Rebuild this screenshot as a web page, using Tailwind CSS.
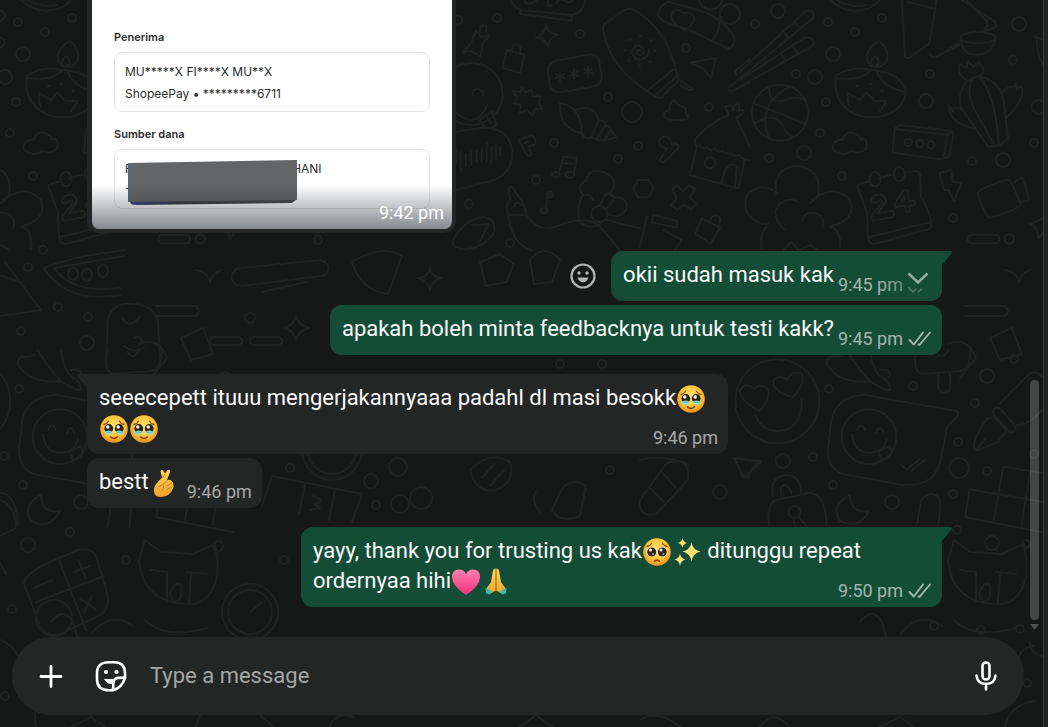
<!DOCTYPE html>
<html lang="id">
<head>
  <meta charset="UTF-8" />
  <meta name="viewport" content="width=device-width, initial-scale=1.0"/>
  <title>Chat</title>
  <script src="https://cdn.jsdelivr.net/npm/@tailwindcss/browser@4"></script>
</head>
<body class="h-screen overflow-hidden bg-[#161717] font-['Roboto',sans-serif] text-[#fafafa]">

  <!-- Shared shapes -->
  <svg class="absolute size-0" aria-hidden="true">
    <defs>
      <radialGradient id="face" cx="50%" cy="40%" r="60%">
        <stop offset="0" stop-color="#ffe36b"/><stop offset=".6" stop-color="#fdc63c"/><stop offset="1" stop-color="#ee8f1c"/>
      </radialGradient>
      <linearGradient id="skin" x1="0" y1="0" x2="0" y2="1">
        <stop offset="0" stop-color="#ffd95a"/><stop offset="1" stop-color="#f2a12c"/>
      </linearGradient>
      <linearGradient id="pink" x1="0" y1="0" x2="0" y2="1">
        <stop offset="0" stop-color="#ff7fb0"/><stop offset="1" stop-color="#f0307c"/>
      </linearGradient>
      <linearGradient id="cover" x1="0" y1="0" x2="1" y2="0">
        <stop offset="0" stop-color="#3a478a"/><stop offset=".3" stop-color="#3f4043"/><stop offset="1" stop-color="#4c4b4d"/>
      </linearGradient>
      <symbol id="tearful" viewBox="0 0 28 28">
        <circle cx="14" cy="14" r="13.8" fill="url(#face)"/>
        <path d="M4 9.500q3-.5 4.500-3.300M24 9.500q-3-.5-4.500-3.300" fill="none" stroke="#8d4d10" stroke-width="1.300" stroke-linecap="round"/>
        <path d="M4.500 15q-.5 4.500 3 5 3.500 0 5-3M23.500 15q.5 4.500-3 5-3.500 0-5-3" fill="#8fe0d8"/>
        <circle cx="8.800" cy="13.500" r="4.400" fill="#26221f"/><circle cx="19.200" cy="13.500" r="4.400" fill="#26221f"/>
        <path d="M5.500 16.300q3.300-1.800 6.600 0-1 1.700-3.300 1.700t-3.300-1.700zM15.900 16.300q3.300-1.800 6.600 0-1 1.700-3.300 1.700t-3.300-1.700z" fill="#7fd0cb"/>
        <circle cx="7.800" cy="12" r="1.700" fill="#fff"/><circle cx="18.200" cy="12" r="1.700" fill="#fff"/>
        <path d="M10.500 21.800q3.500 3.300 7 0" fill="none" stroke="#8a3d12" stroke-width="1.500" stroke-linecap="round"/>
      </symbol>
      <symbol id="pleading" viewBox="0 0 28 28">
        <circle cx="14" cy="14" r="13.800" fill="url(#face)"/>
        <path d="M4 8.500q3-.5 4.500-3M24 8.500q-3-.5-4.500-3" fill="none" stroke="#8d4d10" stroke-width="1.300" stroke-linecap="round"/>
        <circle cx="8.500" cy="14" r="5" fill="#fff"/><circle cx="19.500" cy="14" r="5" fill="#fff"/>
        <circle cx="8.700" cy="14" r="4.500" fill="#30211a"/><circle cx="19.300" cy="14" r="4.500" fill="#30211a"/>
        <circle cx="7.500" cy="12" r="1.500" fill="#fff"/><circle cx="18" cy="12" r="1.500" fill="#fff"/>
        <circle cx="10" cy="16" r=".9" fill="#b9a596"/><circle cx="20.500" cy="16" r=".9" fill="#b9a596"/>
        <path d="M11.500 23.200q2.500-2.200 5 0" fill="none" stroke="#8a3d12" stroke-width="1.500" stroke-linecap="round"/>
      </symbol>
      <symbol id="sparkles" viewBox="0 0 28 28">
        <path fill="#fbe272" d="M18.500 4.500q1.500 7.500 9 9-7.500 1.500-9 10-1.500-8.500-9-10 7.500-1.500 9-9zM9.500 0q.7 4 4.500 5-3.800 1-4.500 5Q8.800 6 5 5 8.800 4 9.500 0zM7 15.500q.8 5 5.500 6-4.700 1-5.500 6.500-.8-5.500-5.500-6.500 4.700-1 5.500-6z"/>
      </symbol>
      <symbol id="heart" viewBox="0 0 28 28">
        <path fill="url(#pink)" d="M14 27Q0 18 0 9q0-7.500 7-7.500 5 0 7 4.500 2-4.500 7-4.500 7 0 7 7.500 0 9-14 18z"/>
      </symbol>
      <symbol id="pray" viewBox="0 0 28 28">
        <path d="M13.800.5q-2.500 0-3 3L9 14l-4.500 6.500 4 5 5.300-3zM14.200.5q2.500 0 3 3L19 14l4.500 6.500-4 5-5.300-3z" fill="url(#skin)"/>
        <path d="M14 1v22" stroke="#b56a16" stroke-width=".9"/>
        <path d="M3.500 19.500l6 3.500-1.500 3.500-4-1zM24.500 19.500l-6 3.500 1.500 3.500 4-1z" fill="#38b6a6"/>
      </symbol>
      <symbol id="finger-heart" viewBox="0 0 28 28">
        <path d="M10.500 2q1.800-1.800 3 0l1.500 2.500L17.500 1q2-1 2.500 1 .2 1-1 3.500L17 11q4-1 5 1.500 1.800 1 1.300 3 1 1.500-.3 4Q20 27.500 11 28q-6.500 0-7-5.500-.5-5 3-8.500l5-5.500z" fill="url(#skin)"/>
        <path d="M15 5l-2.500 4M17 11.500l-4 4M21.500 14l-4.500 3M22 18l-5 2.500M8 18q4-3 5.500-1t-2 5" fill="none" stroke="#c87a1c" stroke-width="1" stroke-linecap="round"/>
      </symbol>
      <symbol id="ticks" viewBox="0 0 24 16">
        <path d="M1.500 9l4.300 4.500L15 1.500M10.500 13.500l1 .3L22 1.500" fill="none" stroke="currentColor" stroke-width="1.900" stroke-linejoin="round" stroke-linecap="round"/>
      </symbol>
    </defs>
  </svg>

  <div class="relative flex h-full">
    <!-- Doodle wallpaper -->
    <svg class="absolute left-0 top-0 h-[727px] w-[1048px]" viewBox="0 0 1048 727" fill="none" stroke="#212323" stroke-width="2" stroke-linecap="round" stroke-linejoin="round" aria-hidden="true">
      <g id="tile">
        <g transform="translate(450 0) scale(.3333)" stroke-width="6">
          <path d="M185 0q5 25 30 30l150 15q35-5 40-45M210 30v12l155 20V50M225 0q0 15 15 10T260 0M295 0l-3 18 15-2M320 10q5-15 20-10 25 15 30-5"/>
          <path d="M78 92l15 18 25-5-20 27-7 38-28-18-23 5 22-27zM90 95q-2-20 14-20 8 5 4 20"/>
          <path d="M288 76q2 22 36 28-28 8-29 36-10-26-38-28 28-10 31-36z"/>
          <path d="M170 150l54 14-14 54-52-14zM185 152q0-20 15-18 16 4 10 22"/>
          <path d="M320 182l95-18q30-2 34 25l6 40q0 25-22 30l-100 18q-30 2-34-25l-6-40q0-25 27-30z"/>
          <path d="M330 215v28M318 222l24 14M342 222l-24 14M372 207v28M360 214l24 14M384 214l-24 14M415 200v28M403 207l24 14M427 207l-24 14"/>
          <path d="M460 92q-5-15 10-25l50-35q15-10 30-3 110 60 135 215l-50 48q-15 5-28-8-130-80-147-192zM595 270l76-62M614 288l70-62M690 240l40 28q-10 8-38-10"/>
          <path d="M570 152q-8-6-10 4 4 14 18 6 8-20-10-26-22 2-22 22 6 22 28 20 22-6 22-28"/>
          <circle cx="570" cy="152" r="45" stroke-dasharray="4 31"/>
          <path d="M625 40q0-20 30-35l70 20q90 20 130 90 0 25-20 30l-130-60q-85-20-80-45zM808 52q5 40-20 68M705 90q-45-20-40-50 15-20 35 0 25-10 32 15 0 20-27 35z"/>
          <circle cx="840" cy="42" r="30"/><circle cx="782" cy="-8" r="36"/>
          <path d="M720 188l78-14-16 60-22-28zM860 225l-5-12 45-35M835 270l8 5 57-28M837 262l63-50"/>
          <circle cx="65" cy="282" r="93"/><path d="M68 285q0-20 17-18 14 2 14 20M20 340q60 50 92-25M88 360l38-25 14 40q-30 25-52-15zM108 345l12 22"/>
          <path d="M18 395l80-12q80 0 88 70 5 72-70 92l-98 25M18 450v40M32 455v60M48 462v36M64 455v40M80 450v36M95 445v40M110 425v60M124 440v50M138 435v44M150 440v24"/>
          <path d="M215 262l12 16 18-10 4 20 25 2-8 18 12 20-22-2-8 20-16-16-22 8 2-22-20-6 10-18-14-18 24 2z"/>
          <path d="M330 310q62 8 66 90-70-14-66-90zM378 328q55-18 68 35l-22 50q-25 5-28-13M446 362q20-2 20 15l-26 40-18-4M466 378q18-2 16 12l-20 32-22-5M482 388l16 24-36 10"/>
          <path d="M672 298q5 15 22 20 22 8 12 25 15 6 4 15-35 8-65-4-10-20 14-24-2-20 13-32z"/>
          <path d="M735 420q30-42 100-75l-8-25q20-12 22 10 2-25 18-15v18q16-8 12 6l-20 15 40 86M735 420q-5 22 15 16 8 14 20 4 10 14 24 6 10 14 24 6 10 14 24 6 10 14 24 6 10 14 34 16M740 442l-20 84 145 40 20-90M815 548l10-38q15-25 36-12l-6 62"/>
          <circle cx="780" cy="488" r="16"/>
          <path d="M205 420l40-15q16 8 10 28l-20 8 10 22q-8 8-14 2zM222 430l14-5M640 410q-20 10-8 28l18 8-20 34q6 10 14 6l42-44-8-14-12 8q-6-30-26-26z"/>
          <path d="M328 515l12-44 40 2-8 48M338 490l38 2M288 630l6-52 14 12"/>
          <ellipse cx="318" cy="524" rx="12" ry="8"/><ellipse cx="360" cy="524" rx="14" ry="9"/><ellipse cx="282" cy="632" rx="10" ry="7"/><circle cx="300" cy="584" r="9"/>
          <path d="M400 585q-25-25 8-42 10-40 50-28 42 15 32 50-5 15-20 20M395 590q20-15 35 10M395 590q-20 60 0 80 30 20 60 0M450 615l20-38 25 15-25 35M495 592q40 0 34 36-20 30-55 15M470 660l100 25"/>
          <circle cx="448" cy="642" r="24"/>
          <path d="M180 645q-20-20 0-45l-5-35q10-15 20 10l25 35 10 35zM190 620q10-20 25-5M175 645q10 90 70 105M230 645q40 60 100 30 80-30 120 5l60 70"/>
          <path d="M564 540h32l14 25-14 27h-32l-14-27zM668 568l14-12 18 18 18-18 18 12-16 22 18 22-16 18-20-16-20 16-18-14 16-22z"/>
          <path d="M590 650l-20 90M610 645l70 18v20l-75-16zM640 690l55 30-20 30M755 655l55 28-28 48-46-30zM780 662q5-20 24-14 14 10 0 30"/>
          <path d="M10 720q30-60 90-70 40 5 32 50-30 40-80 48-50 0-42-28zM65 675l50-2-25 50"/>
        </g>
        <g transform="translate(740 0) scale(.3333)" stroke-width="6">
          <path d="M0 215L195 35q15-10 25 5 6 10-5 18L0 235M0 240l190-125q18-8 28 5 8 12-5 20L0 260M130 95l14 18M162 65l18 20M125 165l12 20M160 140l12 20"/>
          <path d="M270 0q30 30 75 32 50 0 75-32M290 0q40 25 90 15"/>
          <path d="M485 0l10 165q0 15 18 5l55-40 22-130M500 5l80 20M665 0l100 65q10 15-10 22l-30 8M680 0l60 65q10 10-5 20M568 160q5 15 20 10l70-35M600 165l55-35"/>
          <ellipse cx="714" cy="113" rx="52" ry="17"/><path d="M662 115q5 48 40 48 55 5 65-48"/>
          <circle cx="120" cy="338" r="84"/><path d="M88 265q-5 40 40 38 50-20 70 0M40 310q80 30 155 62M45 370q60-40 85 10 10 25 30 30M150 260q-100 50-65 152"/>
          <path d="M418 122q-30 15-38 45 0 30 25 34 35 0 38-35-4-25-25-44zM405 168q-25 25 0 32 22-10 0-32zM395 210q-60-15-108 18-10 95 80 122l50 2q75-20 80-75-10-55-85-65zM290 235q70 10 105-25M410 215q20 50 85 60M330 320q-10-20-5-40l35 20 20-22 22 24 38 2-20 30"/>
          <path d="M352 258h2M390 252h2M425 272h2" stroke-width="9"/>
          <path d="M660 300q0-55 50-70 60 0 80 65l14 120q-20 25-60 25l-72-105q-14-15-12-35zM700 232q-25 40 5 100l60 105M715 228q50 50 62 205M680 240q-30-15-20-48l20 12 4-20 18 16 12-16q30 30 5 42M705 385q-70-10-78-60l30-2 15 10M785 280q20-30 60-18 10 40-45 90M625 315l15 20M825 250l5 16"/>
          <path d="M300 460q-30-5-18-32 15-12 25-8 15-38 50-12 10 12 4 10 25-8 17 30-20 15-45 4-15 14-33 8z"/>
          <path d="M465 385l15-10 155 18 5 12-12 65-25 8-145-20zM465 388l158 16 15-10M622 406l-12 68"/>
          <circle cx="505" cy="427" r="11"/><circle cx="540" cy="431" r="11"/><circle cx="573" cy="435" r="11"/>
          <path d="M110 585q-15-80 60-88 75 10 65 82-5 20-25 30M115 580q-50-35-90 0-30 60 35 90l25 2M215 600q70-50 115 0 20 60-60 80M80 680q-25 30-15 65M270 680q35 10 30 65M175 605q-50-20-70 30 5 35 28 53M187 660q10-30 45-18 25 15 15 42M130 750l25-25 20 25M180 750l30-15 25 15"/>
          <path d="M352 560q0-10 35-15M415 535l45-12M490 518l35-5q14 2 16 15l2 65M352 560l28 75 4 75q2 25 22 22l160-45q12-5 8-20-10-50-32-75M385 712l185-45"/>
          <ellipse cx="405" cy="537" rx="16" ry="22"/><ellipse cx="478" cy="522" rx="16" ry="22"/>
          <path d="M392 605q5-25 35-20 20 15 0 35l-15 20 45-8q12 10 0 20l-60 10q-8-10 5-24l25-30q0-10-12-5-15 12-23 2zM465 610l25-38q15-5 15 8l2 22 18 2-2 12-16 2 4 16-12 3-4-20-30 5zM482 604l12-3-2-14z"/>
          <path d="M598 520l36-10 4 35 26 4-22 55-16-35-14 2zM712 580q0-12 90-42 15 5 40 75 0 12-90 40-12 5-40-73zM822 548l22-15q8 5 24 68l-26 4"/>
          <rect x="682" y="704" width="96" height="26" rx="13"/><circle cx="808" cy="717" r="14"/>
          <path d="M882 110q15 5 30 10M890 120q5 60 22 80M868 670q20 0 44-20M868 670q25 8 28 45l16-20"/>
        </g>
        <g transform="translate(730 350) scale(.3333)" stroke-width="6">
          <circle cx="142" cy="154" r="126"/><path d="M75 195q20 50 75 48 70-10 65-95M88 182q-55-25-58-60 15-30 42-5 20-20 42 0 10 30-26 65zM188 142q-55-15-58-48 15-25 42-5 12-30 42-18 15 30-26 71z"/>
          <path d="M290 40q0-25 30-20l20-5M290 40q30 60 130 55 50 30 60 25 0-30-30-40Q425 50 420 0M350 0q30 50 70 95M450 60q35-5 28 20"/>
          <path d="M400 134l275 48q15 2 8 15l-32 35-20 100q-15 65-80 72h-35l-160-28q-65-10-62-80l10-85q15-70 96-77z"/>
          <circle cx="417" cy="260" r="82"/><path d="M382 240q12-28 22 0M438 248q12-28 22 0M366 252q5 55 52 56 45 0 52-42M445 305l35-18 5 20q-10 25-30 20zM515 345l15 14 40-32M545 360l40-30"/>
          <path d="M560 0q-15 60 15 72l110-8q40-5 35-64M625 74v40q5 16 20 15 16-2 16-20V70M620 5q15 30 35-5"/>
          <path d="M732 290q-5-20 40-85l20-5 38 40-25 35-60 26q-12 0-13-11zM740 298l28-35M790 180q10-15 25 0l42 50q0 16-16 18l-50-55zM808 162l90-90q20-12 38 8M860 225q30 5 76-45"/>
          <path d="M12 324l78 10q-30 15-34 52-30-20-44-62zM128 440q-8-65 45-65 40 5 40 55M155 435q-8-25 8-30 12 0 22 25M118 530q-10-65 20-80l100-22q50 5 52 98"/>
          <circle cx="194" cy="486" r="18"/><path d="M190 505l5 25M205 500l25 30"/>
          <path d="M360 435q-60 30-30 78 55 30 87-30-55 10-57-48zM560 530l12-75q15-30 45-20 15 10 14 30l-6 65"/>
          <path d="M820 350l120 20M820 350l-28 160M718 418l222 38M718 418l-12 84 234 45M900 365l-25 160"/>
        </g>
        <!-- Middle and bottom of the tile -->
        <path d="M480 262l20-8 14 10-8 18-20 4zM530 260q14-18 30 0l-8 22-18 2zM352 262q30-18 50-6l-14 38q-28-4-36-32zM262 292l45-10M430 268q2 10 12 10-10 2-12 12-2-10-12-12 10 0 12-10zM232 276q2-8 10-8l78-8q8 2 8 8t-6 8l-80 10q-10 0-10-10z"/>
        <rect x="210" y="337" width="32" height="8" rx="4"/><rect x="250" y="337" width="32" height="8" rx="4"/>
        <path d="M296 316q2 10 14 12-12 2-14 12-2-10-12-12 10-2 12-12zM262 506l10-30 90 18-10 28M305 484l-6 30M335 490l-6 30M312 496q10 2 8 6l-6 2 6 4-10 2"/>
        <circle cx="332" cy="450" r="30"/><circle cx="332" cy="450" r="24"/>
        <path d="M470 470q20-20 40-8 6 20-14 28-20 4-26-20zM482 478l12-14M490 486l14-16M560 492q10-16 26-6l-6 30q-20 8-28-6zM640 500l26-36q24-10 22 16l-32 34q-18 4-16-14zM650 488l14 14M662 472l14 16M640 460q20-6 48 4M540 512q-10-12-4-20M735 458l26 4-18 16z"/>
        <path d="M948 560l6-20 16 12 32 2 22-10q10 50-20 60-52 2-56-44zM960 570l16 2v30M996 572l20 2M1000 574l-2 28M984 585q8-4 6 8 0 10-8 8-6-8 2-16z"/>
        <path d="M965 306h40M965 316h40q6-5 0-10M990 338l22-10 10 26-22 6zM948 344q20-8 28 14l-16 20M1005 270q12 2 14 12 2-10 12-12"/>
        <path d="M954 620q20 20 62 8M860 622q12-16 22 0l4 14M900 634q20-24 42-8M1018 660q2-12 16-14M1005 727q4-22 30-26M1030 642q0 12 12 14"/>
        <path d="M240 715q12-14 22 2l12 10M330 727q4-16 24-10M520 727l16-12 16 12M640 720q18-12 40 7M760 727q12-18 28-2M880 727l20-10 14 10"/>
      </g>
      <use href="#tile" x="-809"/>
      <!-- Left column -->
      <path d="M44 268q30-12 82-18M44 268q22 36 76 27M54 268l70-12M54 268q18 26 66 20"/>
      <ellipse cx="73" cy="274" rx="5" ry="6"/><ellipse cx="87" cy="275" rx="5" ry="6"/><ellipse cx="103" cy="271" rx="5" ry="6"/>
      <path d="M5 262l36 48-41 6M0 275l22 8"/>
      <path d="M106 362l2-44q6-16 24-14 22 0 26 18l2 38M122 318q8 12 18-2M134 338q6-4 8 4M124 346q10 8 20 2"/>
      <path d="M24 584q0-10 26-22l28-12q14-2 18 6l12 40q2 16-14 22l-34 16q-12 4-20-8zM36 602l68-26M58 558l28 72M34 588l18-8M78 560l8 18M74 572l16-6M80 598l16 12M92 596l-8 16"/>
      <circle cx="54" cy="618" r="18"/>
      <circle cx="250" cy="612" r="28"/><circle cx="250" cy="612" r="22"/><path d="M250 612l12-10M6 574l-8-14"/>
      <path d="M0 500q16 6 16 28l-16 8M0 640q14 4 20 22M36 727l-2-20 16-14"/>
      <!-- Loose dots -->
      <g>
        <circle cx="755" cy="24" r="4"/><circle cx="778" cy="11" r="7"/><circle cx="828" cy="22" r="4"/><circle cx="855" cy="32" r="4"/><circle cx="882" cy="18" r="4"/><circle cx="833" cy="54" r="7"/><circle cx="796" cy="74" r="4"/><circle cx="815" cy="77" r="7"/><circle cx="826" cy="102" r="4"/><circle cx="820" cy="133" r="4"/><circle cx="804" cy="153" r="7"/><circle cx="769" cy="158" r="4"/><circle cx="842" cy="176" r="4"/>
        <circle cx="930" cy="74" r="4"/><circle cx="926" cy="101" r="7"/><circle cx="1019" cy="24" r="7"/><circle cx="1013" cy="60" r="4"/><circle cx="1039" cy="107" r="7"/><circle cx="1034" cy="143" r="4"/><circle cx="972" cy="161" r="4"/><circle cx="1003" cy="160" r="7"/><circle cx="953" cy="218" r="4"/>
        <circle cx="458" cy="20" r="4"/><circle cx="497" cy="18" r="4"/><circle cx="580" cy="34" r="4"/><circle cx="686" cy="48" r="4"/><circle cx="608" cy="97" r="4"/><circle cx="709" cy="107" r="4"/><circle cx="554" cy="143" r="4"/><circle cx="638" cy="146" r="4"/><circle cx="618" cy="159" r="4"/><circle cx="536" cy="180" r="4"/><circle cx="469" cy="204" r="4"/><circle cx="632" cy="112" r="10"/><circle cx="510" cy="243" r="4"/>
        <circle cx="829" cy="389" r="4"/><circle cx="913" cy="386" r="4"/><circle cx="987" cy="376" r="7"/><circle cx="1014" cy="359" r="4"/><circle cx="975" cy="403" r="4"/><circle cx="958" cy="442" r="4"/><circle cx="959" cy="468" r="10"/><circle cx="987" cy="471" r="4"/><circle cx="953" cy="494" r="4"/><circle cx="783" cy="461" r="7"/><circle cx="813" cy="457" r="4"/><circle cx="833" cy="485" r="4"/><circle cx="892" cy="502" r="7"/><circle cx="1034" cy="454" r="4"/>
        <circle cx="18" cy="22" r="4"/><circle cx="72" cy="18" r="4"/><circle cx="45" cy="32" r="4"/><circle cx="23" cy="54" r="7"/><circle cx="5" cy="77" r="7"/><circle cx="16" cy="102" r="4"/><circle cx="10" cy="133" r="4"/><circle cx="33" cy="176" r="4"/><circle cx="43" cy="250" r="4"/><circle cx="28" cy="267" r="4"/><circle cx="58" cy="307" r="4"/><circle cx="88" cy="317" r="4"/><circle cx="87" cy="343" r="7"/><circle cx="21" cy="331" r="4"/><circle cx="19" cy="389" r="4"/><circle cx="4" cy="456" r="4"/><circle cx="23" cy="485" r="4"/><circle cx="81" cy="502" r="7"/><circle cx="70" cy="532" r="4"/><circle cx="28" cy="545" r="7"/><circle cx="12" cy="609" r="4"/>
        <circle cx="290" cy="468" r="4"/><circle cx="398" cy="467" r="9"/><circle cx="371" cy="481" r="7"/><circle cx="421" cy="498" r="11"/><circle cx="376" cy="505" r="4"/><circle cx="400" cy="504" r="9"/><circle cx="610" cy="470" r="4"/><circle cx="720" cy="492" r="7"/><circle cx="992" cy="543" r="7"/><circle cx="957" cy="530" r="4"/><circle cx="1026" cy="544" r="4"/><circle cx="934" cy="626" r="4"/><circle cx="981" cy="630" r="4"/><circle cx="1020" cy="629" r="4"/><circle cx="1027" cy="683" r="4"/><circle cx="5" cy="696" r="4"/><circle cx="218" cy="546" r="5"/><circle cx="126" cy="560" r="4"/><circle cx="284" cy="560" r="4"/><circle cx="318" cy="240" r="4"/><circle cx="250" cy="318" r="5"/><circle cx="560" cy="364" r="4"/><circle cx="602" cy="364" r="4"/>
      </g>
    </svg>

    <main class="relative flex min-w-0 flex-1 flex-col">
      <!-- Messages -->
      <div class="flex flex-1 flex-col items-start justify-end overflow-hidden pr-[101px] pb-[30px] pl-[87px] text-[22px] leading-[30px]">

        <div class="relative w-[369px] shrink-0 overflow-hidden rounded-xl border-4 border-l-5 border-[#242626] bg-white px-[22px] pt-20 pb-5 font-['Inter',sans-serif] text-[#2b2b2b]">
          <h3 class="text-[11px] leading-4 font-semibold">Penerima</h3>
          <div class="mt-[7px] h-[60px] rounded-lg border border-[#e2e2e2] px-2.5 pt-2 text-xs leading-[22px]">
            <p>MU*****X FI****X MU**X</p>
            <p>ShopeePay • *********6711</p>
          </div>
          <h3 class="mt-3.5 text-[11px] leading-4 font-semibold">Sumber dana</h3>
          <div class="relative mt-[7px] h-[60px] rounded-lg border border-[#e2e2e2] px-2.5 pt-2 text-xs leading-[22px]">
            <p class="flex"><span class="w-[167px]">R</span><span>HANI</span></p>
            <p class="leading-4">-</p>
            <svg class="absolute top-2.5 left-[13px] h-[47px] w-[170px]" viewBox="0 0 170 47" aria-hidden="true">
              <path d="M0 38l3 6q2 1 6 1l155-2 5-4V34z" fill="url(#cover)"/>
              <path d="M0 3L169 0v40L0 42z" fill="#646567"/>
              <path d="M.5 3v38" stroke="#56639c"/>
            </svg>
          </div>
          <div class="absolute inset-x-0 bottom-0 h-11 bg-linear-to-b from-transparent to-[#0b141a]/50"></div>
          <time class="absolute right-2 bottom-1 font-['Roboto',sans-serif] text-lg leading-6 text-white">9:42 pm</time>
        </div>

        <div class="mt-[18px] flex shrink-0 items-center gap-[14px] self-end">
          <button aria-label="React" class="text-[#b3b4b4]">
            <svg class="size-7" viewBox="0 0 28 28" fill="none" stroke="currentColor" stroke-width="2.2">
              <circle cx="14" cy="14" r="11.500"/>
              <circle cx="10" cy="11" r="1.700" fill="currentColor" stroke="none"/><circle cx="18" cy="11" r="1.700" fill="currentColor" stroke="none"/>
              <path d="M8.500 15.500h11q-1.500 4.700-5.500 4.700t-5.500-4.700z" fill="currentColor" stroke="none"/>
            </svg>
          </button>
          <div class="relative rounded-xl rounded-tr-none bg-[#144d37] pt-[9px] pr-3 pb-[11px] pl-3">
            <svg class="absolute top-0 left-full h-3.5 w-2.5" viewBox="0 0 10 14" aria-hidden="true"><path d="M0 0h9q2 1 0 3L0 14z" fill="#144d37"/></svg>
            <p>okii sudah masuk kak<span class="inline-block w-24"></span></p>
            <div class="absolute right-2.5 bottom-1 flex h-6 items-center gap-[5px] text-lg leading-6 text-white/60">
              <time>9:45 pm</time>
              <svg class="h-4 w-6" aria-hidden="true"></svg>
            </div>
            <div class="absolute right-0 bottom-0 h-full w-16 rounded-xl bg-linear-to-r from-transparent to-[#144d37]"></div>
            <button aria-label="Message menu" class="absolute top-4 right-3 text-[#8fae9f]">
              <svg class="h-7 w-6" viewBox="0 0 24 28" fill="none" stroke="currentColor" stroke-width="2.500">
                <path d="M2.500 6.500l9.500 9 9.500-9"/>
                <path d="M2 20l5 5 3-3M12 25l4-3.500" stroke-width="1.800" opacity=".4"/>
              </svg>
            </button>
          </div>
        </div>

        <div class="relative mt-1 shrink-0 self-end rounded-xl bg-[#144d37] pt-[9px] pr-3 pb-[11px] pl-3">
          <p>apakah boleh minta feedbacknya untuk testi kakk?<span class="inline-block w-24"></span></p>
          <div class="absolute right-2.5 bottom-1 flex h-6 items-center gap-[5px] text-lg leading-6 text-white/60">
            <time>9:45 pm</time>
            <svg class="h-4 w-6" aria-hidden="true"><use href="#ticks"/></svg>
          </div>
        </div>

        <div class="relative mt-[19px] max-w-[641px] shrink-0 rounded-xl rounded-tl-none bg-[#242626] pt-[9px] pr-3 pb-[11px] pl-3">
          <svg class="absolute top-0 right-full h-3.5 w-2.5" viewBox="0 0 10 14" aria-hidden="true"><path d="M10 0H1q-2 1 0 3l9 11z" fill="#242626"/></svg>
          <p>seeecepett ituuu mengerjakannyaaa padahl dl masi besokk<svg role="img" aria-label="🥹" class="mx-px inline-block size-7 align-[-8px]"><use href="#tearful"/></svg><svg role="img" aria-label="🥹" class="mx-px inline-block size-7 align-[-8px]"><use href="#tearful"/></svg><svg role="img" aria-label="🥹" class="mx-px inline-block size-7 align-[-8px]"><use href="#tearful"/></svg></p>
          <time class="absolute right-2.5 bottom-1 text-lg leading-6 text-white/60">9:46 pm</time>
        </div>

        <div class="relative mt-1 shrink-0 rounded-xl bg-[#242626] pt-[9px] pr-3 pb-[11px] pl-3">
          <p>bestt<svg role="img" aria-label="🫰" class="mx-px inline-block size-7 align-[-8px]"><use href="#finger-heart"/></svg><span class="inline-block w-[71px]"></span></p>
          <time class="absolute right-2.5 bottom-1 text-lg leading-6 text-white/60">9:46 pm</time>
        </div>

        <div class="relative mt-[19px] max-w-[641px] shrink-0 self-end rounded-xl rounded-tr-none bg-[#144d37] pt-[9px] pr-3 pb-[11px] pl-3">
          <svg class="absolute top-0 left-full h-3.5 w-2.5" viewBox="0 0 10 14" aria-hidden="true"><path d="M0 0h9q2 1 0 3L0 14z" fill="#144d37"/></svg>
          <p>yayy, thank you for trusting us kak<svg role="img" aria-label="🥺" class="mx-px inline-block size-7 align-[-8px]"><use href="#pleading"/></svg><svg role="img" aria-label="✨" class="mx-px inline-block size-7 align-[-8px]"><use href="#sparkles"/></svg> ditunggu repeat ordernyaa hihi<svg role="img" aria-label="💗" class="mx-px inline-block size-7 align-[-8px]"><use href="#heart"/></svg><svg role="img" aria-label="🙏" class="mx-px inline-block size-7 align-[-8px]"><use href="#pray"/></svg><span class="inline-block w-24"></span></p>
          <div class="absolute right-2.5 bottom-1 flex h-6 items-center gap-[5px] text-lg leading-6 text-white/60">
            <time>9:50 pm</time>
            <svg class="h-4 w-6" aria-hidden="true"><use href="#ticks"/></svg>
          </div>
        </div>
      </div>

      <!-- Composer -->
      <form class="mr-[19px] mb-3 ml-3 flex h-[78px] shrink-0 items-center rounded-full bg-[#242626] pr-[22px] pl-[23px]">
        <button type="button" aria-label="Attach" class="mr-7">
          <svg class="size-8" viewBox="0 0 32 32" fill="none" stroke="#fff" stroke-width="2.800" stroke-linecap="round"><path d="M16 6.500v20M6 16.500h20"/></svg>
        </button>
        <button type="button" aria-label="Stickers" class="mr-[23px]">
          <svg class="size-8" viewBox="0 0 32 32" fill="none" stroke="#fff" stroke-width="2.600" stroke-linejoin="round" stroke-linecap="round">
            <path d="M18 30.200h-4q-12 0-12-11v-6Q2 2.300 14 2.300h5q11 0 11 10.900v4.600q-3 10-12 12.400z"/>
            <path d="M17.500 30q1-2 .8-6.500.2-5.300 5.200-5.700 4 .2 6.500-.6"/>
            <path d="M10 19.500h7.500v4q-5.500.5-7.500-4z" fill="#fff" stroke-width="1"/>
            <circle cx="11" cy="12" r="2.100" fill="#fff" stroke="none"/><circle cx="21.500" cy="12" r="2.100" fill="#fff" stroke="none"/>
          </svg>
        </button>
        <input id="message" type="text" aria-label="Type a message" placeholder="Type a message" class="h-8 min-w-0 flex-1 bg-transparent text-[22px] leading-8 outline-none placeholder:text-[#a5a6a6]" />
        <button type="button" aria-label="Voice message">
          <svg class="size-8" viewBox="0 0 32 32" fill="none" stroke="#fff" stroke-width="2.600" stroke-linecap="round"><rect x="12.500" y="2.500" width="7" height="17" rx="3.500"/><path d="M6.500 15.500q.8 8.300 9.500 8.500 8.700-.2 9.500-8.500M16 24.500v5"/></svg>
        </button>
      </form>

      <!-- Scrollbar -->
      <div class="absolute top-[380px] right-1 bottom-[107px] w-[9px] rounded-full bg-white/20"></div>
      <svg class="absolute right-1 bottom-24 h-2 w-[9px]" viewBox="0 0 9 8" aria-hidden="true"><path d="M0 1h9L4.500 7z" fill="#4d4e4e"/></svg>
    </main>
    <aside class="relative w-[5px] shrink-0 border-l border-[#3c3d3d] bg-[#212222]"></aside>
  </div>

</body>
</html>
